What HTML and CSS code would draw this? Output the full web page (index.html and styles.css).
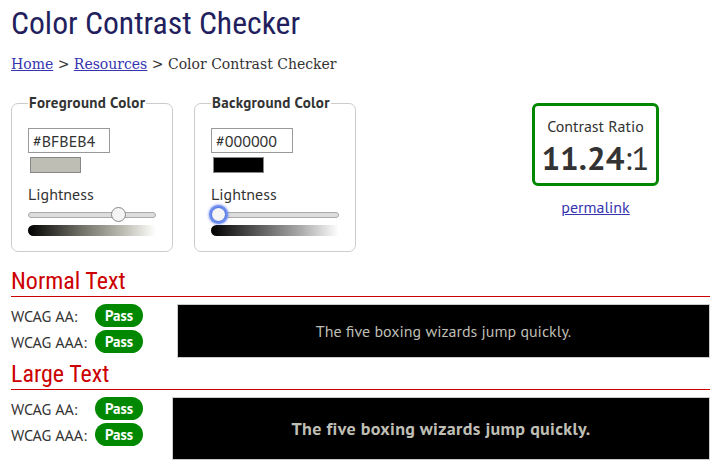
FILE: index.html
```html
<!DOCTYPE html>
<html lang="en">
<head>
<meta charset="utf-8">
<title>Color Contrast Checker</title>
<link rel="stylesheet" href="styles.css">
</head>
<body>
<div class="page">
  <h1 class="title">Color Contrast Checker</h1>
  <nav class="crumbs"><a href="#">Home</a> &gt; <a href="#">Resources</a> &gt; Color Contrast Checker</nav>

  <div class="controls">
    <fieldset class="picker">
      <legend>Foreground Color</legend>
      <input class="hex" type="text" value="#BFBEB4">
      <div class="swatch swatch-fg"></div>
      <div class="label">Lightness</div>
      <div class="track"><span class="thumb thumb-fg"></span></div>
      <div class="grad grad-fg"></div>
    </fieldset>
    <fieldset class="picker">
      <legend>Background Color</legend>
      <input class="hex" type="text" value="#000000">
      <div class="swatch swatch-bg"></div>
      <div class="label">Lightness</div>
      <div class="track"><span class="thumb thumb-bg"></span></div>
      <div class="grad grad-bg"></div>
    </fieldset>
    <div class="ratio-col">
      <div class="ratio-box">
        <div class="ratio-label">Contrast Ratio</div>
        <div class="ratio-value"><b>11.24</b>:1</div>
      </div>
      <a class="permalink" href="#">permalink</a>
    </div>
  </div>

  <h2 class="section section-normal">Normal Text</h2>
  <div class="result result-normal">
    <div class="checks">
      <div class="check"><span class="lbl">WCAG AA:</span><span class="pass">Pass</span></div>
      <div class="check"><span class="lbl">WCAG AAA:</span><span class="pass">Pass</span></div>
    </div>
    <div class="sample sample-normal">The five boxing wizards jump quickly.</div>
  </div>

  <h2 class="section section-large">Large Text</h2>
  <div class="result result-large">
    <div class="checks">
      <div class="check"><span class="lbl">WCAG AA:</span><span class="pass">Pass</span></div>
      <div class="check"><span class="lbl">WCAG AAA:</span><span class="pass">Pass</span></div>
    </div>
    <div class="sample sample-large">The five boxing wizards jump quickly.</div>
  </div>
</div>
</body>
</html>
```

FILE: styles.css
```css
* { box-sizing: border-box; }
body {
  margin: 0;
  background: #fff;
  color: #333;
  font-family: "PT Sans", Lato, "Noto Sans", sans-serif;
}
.page { padding: 5px 5px 0 11px; }

.title {
  margin: 0;
  font-family: "Roboto Condensed", "Liberation Sans Narrow", "DejaVu Sans Condensed", Roboto, sans-serif;
  font-weight: 400;
  font-size: 31.7px;
  line-height: 38px;
  color: #231f5e;
}
.crumbs {
  margin-top: 11px;
  font-family: "DejaVu Serif", serif;
  font-size: 14px;
  line-height: 20px;
  color: #333;
}
.crumbs a { color: #3535b0; }

.controls {
  display: flex;
  align-items: flex-start;
  margin-top: 20px;
}
.picker {
  width: 162px;
  margin: 0 21px 0 0;
  padding: 16px 16px 15px 16px;
  border: 1px solid #ccc;
  border-radius: 7px;
}
.picker legend {
  font-weight: 700;
  font-size: 15px;
  line-height: 18px;
  letter-spacing: 0.3px;
  padding: 0 1px;
  margin-left: 0;
  color: #333;
}
.hex {
  display: block;
  width: 82px;
  height: 25px;
  margin: 0;
  padding: 0 4px;
  border: 1px solid #999;
  font-family: inherit;
  font-size: 16px;
  color: #333;
  background: #fff;
}
.swatch {
  width: 51px;
  height: 16px;
  margin: 4px 0 0 2px;
  border: 1px solid #888;
}
.swatch-fg { background: #BFBEB4; }
.swatch-bg { background: #000; }
.label {
  margin-top: 11px;
  font-size: 16px;
  line-height: 20px;
}
.track {
  position: relative;
  width: 128px;
  height: 6px;
  margin-top: 8px;
  border: 1px solid #aaa;
  border-radius: 3px;
  background: #ddd;
}
.thumb {
  position: absolute;
  top: -6px;
  width: 15px;
  height: 15px;
  border-radius: 50%;
  background: #f4f4f4;
  border: 1px solid #888;
}
.thumb-fg { left: 82px; }
.thumb-bg {
  left: -1px;
  border-color: #4a6fe0;
  box-shadow: 0 0 0 2px #6f8ff0, 0 0 2px 3px rgba(90,120,240,.45);
}
.grad {
  width: 128px;
  height: 11px;
  margin-top: 7px;
  border-radius: 6px 0 0 6px;
}
.grad-fg { background: linear-gradient(to right, #000 0%, #6d6c63 40%, #BFBEB4 75%, #fff 100%); }
.grad-bg { background: linear-gradient(to right, #000 0%, #555 35%, #aaa 70%, #fff 100%); }

.ratio-col {
  margin-left: 155px;
  margin-top: 9px;
  display: flex;
  flex-direction: column;
  align-items: center;
}
.ratio-box {
  width: 127px;
  height: 83px;
  border: 3px solid #080;
  border-radius: 6px;
  text-align: center;
  padding-top: 11px;
}
.ratio-label { font-size: 16px; line-height: 19px; }
.ratio-value { font-size: 33px; line-height: 38px; margin-top: 3px; }
.ratio-value b { font-weight: 700; }
.permalink {
  margin-top: 11px;
  font-size: 16px;
  color: #3535b0;
}

.section {
  margin: 15px 0 0 0;
  font-family: "Roboto Condensed", "Liberation Sans Narrow", "DejaVu Sans Condensed", Roboto, sans-serif;
  font-weight: 400;
  font-size: 24px;
  line-height: 29px;
  color: #c00;
  border-bottom: 1px solid #c00;
}
.section-large { margin-top: 2px; }
.result {
  display: flex;
  align-items: flex-start;
  margin-top: 7px;
}
.checks { display: flex; flex-direction: column; gap: 3px; }
.check { display: flex; align-items: center; height: 23px; }
.lbl { width: 84px; font-size: 16px; }
.pass {
  display: inline-block;
  width: 48px;
  height: 23px;
  line-height: 23px;
  border-radius: 12px;
  background: #080;
  color: #fff;
  font-weight: 700;
  font-size: 15px;
  text-align: center;
}
.sample {
  flex: 1;
  background: #000;
  color: #BFBEB4;
  border: 1px solid #ccc;
  display: flex;
  align-items: center;
  justify-content: center;
}
.result-normal .sample { margin-left: 34px; height: 54px; font-size: 16px; }
.result-large .sample { margin-left: 29px; height: 63px; font-size: 18px; font-weight: 700; letter-spacing: 0.3px; }
```
